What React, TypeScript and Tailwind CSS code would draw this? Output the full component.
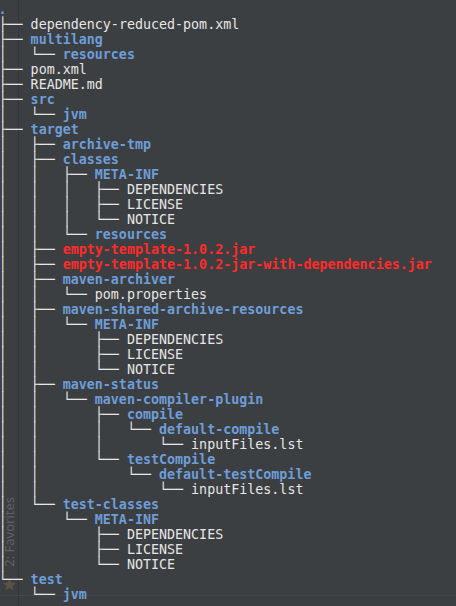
import React from "react";

type Kind = "dir" | "file" | "jar";

type Row = [string, string, Kind];

// tree output, prefix + name + kind
const rows: Row[] = [
    ["", ".", "dir"],
    ["├── ", "dependency-reduced-pom.xml", "file"],
    ["├── ", "multilang", "dir"],
    ["│   └── ", "resources", "dir"],
    ["├── ", "pom.xml", "file"],
    ["├── ", "README.md", "file"],
    ["├── ", "src", "dir"],
    ["│   └── ", "jvm", "dir"],
    ["├── ", "target", "dir"],
    ["│   ├── ", "archive-tmp", "dir"],
    ["│   ├── ", "classes", "dir"],
    ["│   │   ├── ", "META-INF", "dir"],
    ["│   │   │   ├── ", "DEPENDENCIES", "file"],
    ["│   │   │   ├── ", "LICENSE", "file"],
    ["│   │   │   └── ", "NOTICE", "file"],
    ["│   │   └── ", "resources", "dir"],
    ["│   ├── ", "empty-template-1.0.2.jar", "jar"],
    ["│   ├── ", "empty-template-1.0.2-jar-with-dependencies.jar", "jar"],
    ["│   ├── ", "maven-archiver", "dir"],
    ["│   │   └── ", "pom.properties", "file"],
    ["│   ├── ", "maven-shared-archive-resources", "dir"],
    ["│   │   └── ", "META-INF", "dir"],
    ["│   │       ├── ", "DEPENDENCIES", "file"],
    ["│   │       ├── ", "LICENSE", "file"],
    ["│   │       └── ", "NOTICE", "file"],
    ["│   ├── ", "maven-status", "dir"],
    ["│   │   └── ", "maven-compiler-plugin", "dir"],
    ["│   │       ├── ", "compile", "dir"],
    ["│   │       │   └── ", "default-compile", "dir"],
    ["│   │       │       └── ", "inputFiles.lst", "file"],
    ["│   │       └── ", "testCompile", "dir"],
    ["│   │           └── ", "default-testCompile", "dir"],
    ["│   │               └── ", "inputFiles.lst", "file"],
    ["│   └── ", "test-classes", "dir"],
    ["│       └── ", "META-INF", "dir"],
    ["│           ├── ", "DEPENDENCIES", "file"],
    ["│           ├── ", "LICENSE", "file"],
    ["│           └── ", "NOTICE", "file"],
    ["└── ", "test", "dir"],
    ["    └── ", "jvm", "dir"],
];

const nameClass: Record<Kind, string> = {
    dir: "text-[#6e9dd8] font-bold",
    file: "text-[#e6e6e6]",
    jar: "text-[#ff2b2b] font-bold",
};

export default function App() {
    return (
        <div className="relative w-[456px] h-[606px] overflow-hidden bg-[#3c3f41]">
            {/* tool window strip on the left */}
            <div className="absolute left-0 top-0 bottom-0 w-[19px] border-r border-[#333536] flex flex-col items-center justify-end pb-[14px] gap-[10px]">
                <span
                    className="text-[#5e6162] text-[13px] leading-none whitespace-nowrap [writing-mode:vertical-rl] rotate-180"
                    style={{fontFamily: '"Noto Sans", "DejaVu Sans", sans-serif'}}
                >
                    2: Favorites
                </span>
                <svg width="15" height="15" viewBox="0 0 24 24" className="text-[#5c5243]">
                    <path fill="currentColor" d="M12 2l2.9 6.9 7.1.6-5.4 4.7 1.7 7.3L12 17.6 5.7 21.5l1.7-7.3L2 9.5l7.1-.6z"/>
                </svg>
            </div>
            <div className="absolute left-0 right-0 top-[595px] h-px bg-[#45484a]"/>

            <div
                className="relative pt-[2px] ml-[-1.5px] text-[13.33px] leading-[15px] whitespace-pre"
                style={{fontFamily: '"DejaVu Sans Mono", monospace'}}
            >
                {rows.map(([prefix, name, kind], i) => (
                    <div key={i} className="h-[15px]">
                        <span className="text-[#e6e6e6]">{prefix}</span>
                        <span className={nameClass[kind]}>{name}</span>
                    </div>
                ))}
            </div>
        </div>
    );
}
